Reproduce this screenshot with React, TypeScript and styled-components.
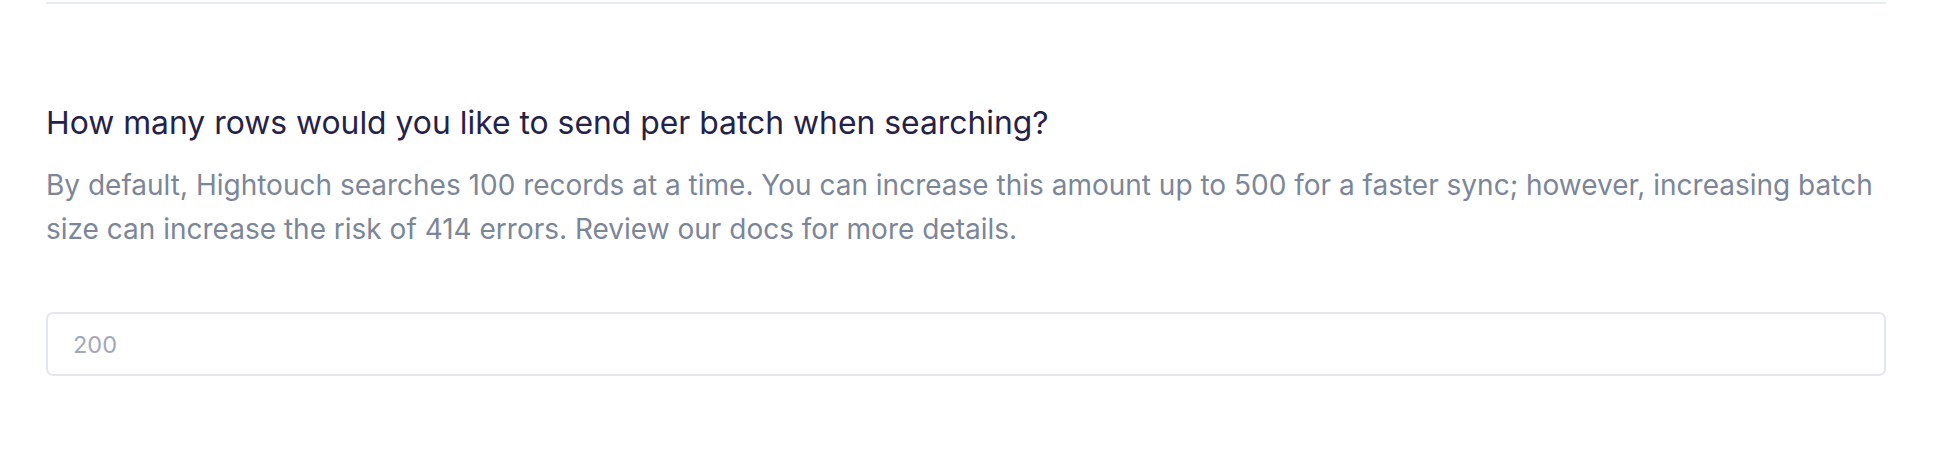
import React from "react";
import styled, { createGlobalStyle } from "styled-components";

const Global = createGlobalStyle`
  html, body { margin: 0; padding: 0; background: #ffffff; }
  body { font-family: Inter, "Noto Sans", sans-serif; -webkit-font-smoothing: antialiased; }
`;

const Page = styled.div`
  padding: 2px 64px 0 46px;
  width: 1840px;
`;

const Divider = styled.div`
  height: 2px;
  background: #e8ebf2;
`;

const Section = styled.section`
  display: flex;
  flex-direction: column;
  padding-top: 99px;
`;

const Heading = styled.h2`
  margin: 0;
  font-size: 31.85px;
  line-height: 40px;
  font-weight: 400;
  color: #25224a;
`;

const Description = styled.p`
  margin: 20px 0 0;
  font-size: 28px;
  line-height: 44px;
  font-weight: 400;
  color: #7c8699;
`;

const Input = styled.input`
  box-sizing: border-box;
  margin-top: 61px;
  width: 100%;
  height: 64px;
  padding: 0 25px;
  border: 2px solid #e5e7ef;
  border-radius: 7px;
  background: #ffffff;
  font-family: Inter, "Noto Sans", sans-serif;
  font-size: 23.5px;
  color: #25224a;
  outline: none;
  &::placeholder { color: #a3a9b8; }
`;

export default function App() {
  return (
    <Page>
      <Global />
      <Divider />
      <Section>
        <Heading>How many rows would you like to send per batch when searching?</Heading>
        <Description>
          By default, Hightouch searches 100 records at a time. You can increase this amount up to 500 for a faster sync; however, increasing batch size can increase the risk of 414 errors. Review our docs for more details.
        </Description>
        <Input type="number" placeholder="200" />
      </Section>
    </Page>
  );
}
